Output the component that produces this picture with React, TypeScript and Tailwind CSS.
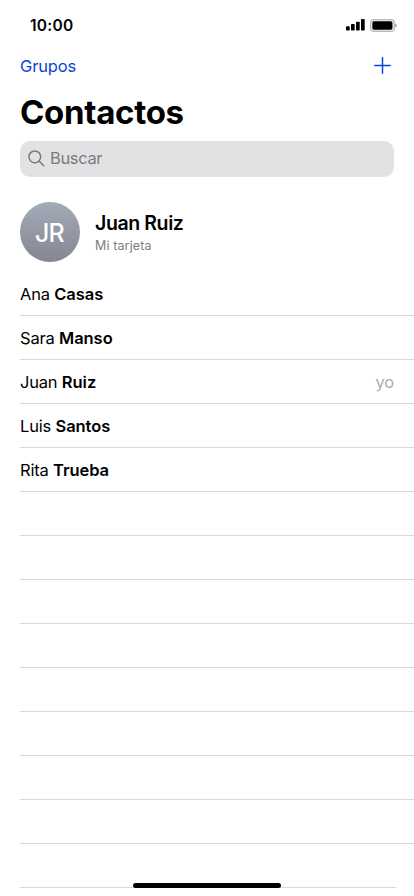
const contacts = [
  { first: 'Ana', last: 'Casas' },
  { first: 'Sara', last: 'Manso' },
  { first: 'Juan', last: 'Ruiz', me: true },
  { first: 'Luis', last: 'Santos' },
  { first: 'Rita', last: 'Trueba' },
]

const EMPTY_ROWS = 8

function StatusBar() {
  return (
    <div className="flex h-[50px] items-center justify-between pl-[30px] pr-[17px]">
      <span className="pt-px text-[15.5px] font-semibold leading-5 tracking-[0.25px]">10:00</span>
      <div className="flex items-center gap-[5px]">
        <svg width="19" height="12" viewBox="0 0 19 12">
          <rect x="0" y="7.2" width="3.7" height="4.3" rx="0.8" />
          <rect x="5" y="5" width="3.7" height="6.5" rx="0.8" />
          <rect x="10" y="2.7" width="3.7" height="8.8" rx="0.8" />
          <rect x="15" y="0" width="3.7" height="11.5" rx="0.8" />
        </svg>
        <svg width="27" height="13" viewBox="0 0 27 13">
          <rect x="0.7" y="0.7" width="23.6" height="11.6" rx="3.4" fill="#fff" stroke="#bcbcbc" strokeWidth="1.4" />
          <rect x="2.3" y="2.3" width="20.2" height="8.4" rx="1.6" />
          <path d="M25.3 4.6v3.8c.8-.3 1.3-1 1.3-1.9s-.5-1.6-1.3-1.9z" fill="#8a8a8a" />
        </svg>
      </div>
    </div>
  )
}

function NavBar() {
  return (
    <div className="flex h-[32px] items-center justify-between pl-5 pr-[23px] text-[#0a44d6]">
      <button className="text-[16.5px] leading-5 tracking-[-0.15px]">Grupos</button>
      <button aria-label="Añadir" className="pb-px">
        <svg width="17" height="17" viewBox="0 0 17 17" fill="none" stroke="currentColor" strokeWidth="1.5" strokeLinecap="round">
          <path d="M8.5 0.8v15.4M0.8 8.5h15.4" />
        </svg>
      </button>
    </div>
  )
}

function SearchField() {
  return (
    <div className="mx-5 flex h-9 items-center gap-[5px] rounded-[10px] bg-[#e2e2e4] pb-px pl-[8px] text-[#7b7b7e]">
      <svg width="17" height="17" viewBox="0 0 17 17" fill="none" stroke="currentColor" strokeWidth="1.5" strokeLinecap="round">
        <circle cx="6.8" cy="6.8" r="5.9" />
        <path d="M11.2 11.2l4.6 4.6" />
      </svg>
      <span className="pb-px text-[16.5px] leading-5 tracking-[-0.35px]">Buscar</span>
    </div>
  )
}

function MyCard() {
  return (
    <div className="mt-[25px] flex h-[60px] items-center gap-[15px] px-5">
      <div className="flex size-[60px] items-center justify-center rounded-full bg-linear-to-b from-[#a4abb9] to-[#848790] pr-px pt-[3px] text-[25px] font-medium tracking-[-0.7px] text-white">
        JR
      </div>
      <div className="pt-[2px]">
        <p className="text-[19.5px] font-semibold leading-[24px] tracking-[-0.4px]">Juan Ruiz</p>
        <p className="mt-[2px] text-[12.5px] leading-[18px] tracking-[0.12px] text-[#7c7c80]">Mi tarjeta</p>
      </div>
    </div>
  )
}

export default function App() {
  return (
    <div className="relative h-[896px] w-[414px] overflow-hidden bg-white font-['Inter',sans-serif] text-black">
      <StatusBar />
      <NavBar />
      <h1 className="mt-[9px] h-[50px] pl-5 text-[33px] font-bold leading-[42px] tracking-[-0.3px]">Contactos</h1>
      <SearchField />
      <MyCard />
      <ul className="mt-[10px] pl-5">
        {contacts.map((contact) => (
          <li
            key={contact.first}
            className="flex h-11 items-center justify-between border-b border-[#d9d9db] pr-5 text-[16.5px] leading-5 tracking-[-0.2px]"
          >
            <span>
              {contact.first} <b className="font-semibold tracking-[-0.05px]">{contact.last}</b>
            </span>
            {contact.me && <span className="text-[#acacae]">yo</span>}
          </li>
        ))}
        {Array.from({ length: EMPTY_ROWS }, (_, i) => (
          <li key={i} className="h-11 border-b border-[#d9d9db]" />
        ))}
        <li className="mr-[18px] h-11 border-b border-[#d9d9db]" />
      </ul>
      <div className="absolute left-[133px] top-[883px] h-[5px] w-[148px] rounded-full bg-black" />
    </div>
  )
}
